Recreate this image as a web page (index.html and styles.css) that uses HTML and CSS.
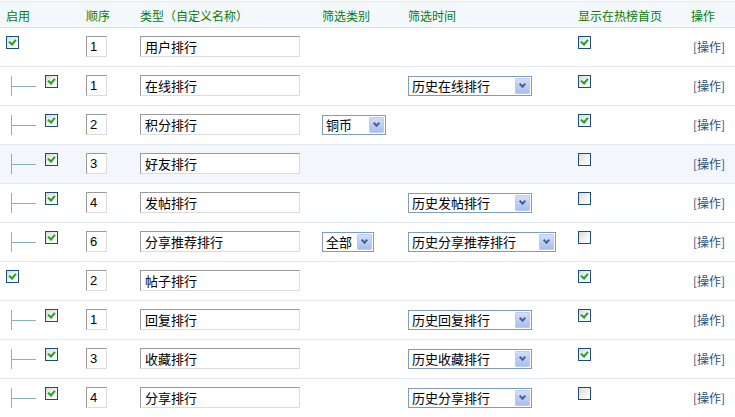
FILE: index.html
```html
<!DOCTYPE html>
<html>
<head>
<meta charset="utf-8">
<link rel="stylesheet" href="styles.css">
</head>
<body>
<div class="table">
  <div class="row head">
    <div class="c c1">启用</div>
    <div class="c">顺序</div>
    <div class="c">类型（自定义名称）</div>
    <div class="c">筛选类别</div>
    <div class="c">筛选时间</div>
    <div class="c">显示在热榜首页</div>
    <div class="c">操作</div>
  </div>

  <div class="row">
    <div class="c c1"><span class="cb on"></span></div>
    <div class="c"><span class="num">1</span></div>
    <div class="c"><span class="txt">用户排行</span></div>
    <div class="c"></div>
    <div class="c"></div>
    <div class="c"><span class="cb on"></span></div>
    <div class="c"><a class="op">[操作]</a></div>
  </div>

  <div class="row">
    <div class="c c1 child"><span class="tree"></span><span class="cb on"></span></div>
    <div class="c"><span class="num">1</span></div>
    <div class="c"><span class="txt">在线排行</span></div>
    <div class="c"></div>
    <div class="c"><span class="sel w124">历史在线排行<i class="arr"></i></span></div>
    <div class="c"><span class="cb on"></span></div>
    <div class="c"><a class="op">[操作]</a></div>
  </div>

  <div class="row">
    <div class="c c1 child"><span class="tree"></span><span class="cb on"></span></div>
    <div class="c"><span class="num">2</span></div>
    <div class="c"><span class="txt">积分排行</span></div>
    <div class="c"><span class="sel w64">铜币<i class="arr"></i></span></div>
    <div class="c"></div>
    <div class="c"><span class="cb on"></span></div>
    <div class="c"><a class="op">[操作]</a></div>
  </div>

  <div class="row hl">
    <div class="c c1 child"><span class="tree"></span><span class="cb on"></span></div>
    <div class="c"><span class="num">3</span></div>
    <div class="c"><span class="txt">好友排行</span></div>
    <div class="c"></div>
    <div class="c"></div>
    <div class="c"><span class="cb"></span></div>
    <div class="c"><a class="op">[操作]</a></div>
  </div>

  <div class="row">
    <div class="c c1 child"><span class="tree"></span><span class="cb on"></span></div>
    <div class="c"><span class="num">4</span></div>
    <div class="c"><span class="txt">发帖排行</span></div>
    <div class="c"></div>
    <div class="c"><span class="sel w124">历史发帖排行<i class="arr"></i></span></div>
    <div class="c"><span class="cb"></span></div>
    <div class="c"><a class="op">[操作]</a></div>
  </div>

  <div class="row">
    <div class="c c1 child"><span class="tree"></span><span class="cb on"></span></div>
    <div class="c"><span class="num">6</span></div>
    <div class="c"><span class="txt">分享推荐排行</span></div>
    <div class="c"><span class="sel w52">全部<i class="arr"></i></span></div>
    <div class="c"><span class="sel w148">历史分享推荐排行<i class="arr"></i></span></div>
    <div class="c"><span class="cb"></span></div>
    <div class="c"><a class="op">[操作]</a></div>
  </div>

  <div class="row">
    <div class="c c1"><span class="cb on"></span></div>
    <div class="c"><span class="num">2</span></div>
    <div class="c"><span class="txt">帖子排行</span></div>
    <div class="c"></div>
    <div class="c"></div>
    <div class="c"><span class="cb on"></span></div>
    <div class="c"><a class="op">[操作]</a></div>
  </div>

  <div class="row">
    <div class="c c1 child"><span class="tree"></span><span class="cb on"></span></div>
    <div class="c"><span class="num">1</span></div>
    <div class="c"><span class="txt">回复排行</span></div>
    <div class="c"></div>
    <div class="c"><span class="sel w124">历史回复排行<i class="arr"></i></span></div>
    <div class="c"><span class="cb on"></span></div>
    <div class="c"><a class="op">[操作]</a></div>
  </div>

  <div class="row">
    <div class="c c1 child"><span class="tree"></span><span class="cb on"></span></div>
    <div class="c"><span class="num">3</span></div>
    <div class="c"><span class="txt">收藏排行</span></div>
    <div class="c"></div>
    <div class="c"><span class="sel w124">历史收藏排行<i class="arr"></i></span></div>
    <div class="c"><span class="cb on"></span></div>
    <div class="c"><a class="op">[操作]</a></div>
  </div>

  <div class="row">
    <div class="c c1 child"><span class="tree"></span><span class="cb on"></span></div>
    <div class="c"><span class="num">4</span></div>
    <div class="c"><span class="txt">分享排行</span></div>
    <div class="c"></div>
    <div class="c"><span class="sel w124">历史分享排行<i class="arr"></i></span></div>
    <div class="c"><span class="cb"></span></div>
    <div class="c"><a class="op">[操作]</a></div>
  </div>
</div>
</body>
</html>
```

FILE: styles.css
```css
html, body {
  margin: 0;
  padding: 0;
  background: #fff;
}
body {
  font-family: "Noto Sans CJK SC", "Liberation Sans", sans-serif;
  font-size: 12px;
  color: #000;
  overflow: hidden;
}
.table {
  padding-top: 1px;
  width: 735px;
}
.row {
  display: grid;
  grid-template-columns: 86px 54px 182px 86px 170px 113px 44px;
  height: 38px;
  box-sizing: border-box;
  padding-bottom: 1px;
  border-bottom: 1px solid #e1e8ef;
  align-items: stretch;
  box-sizing: content-box;
  height: 37px;
}
.row.head {
  border-top: 1px solid #e1eaf2;
  border-bottom: 1px solid #d9e4ee;
  background: #f3f8fc;
  color: #0b7a0b;
  line-height: 14px;
  padding-top: 2px;
  padding-bottom: 0;
  box-sizing: content-box;
  height: 23px;
}
.row.hl {
  background: #f3f6fb;
}
.c {
  display: flex;
  align-items: center;
  white-space: nowrap;
}
.c1 {
  padding-left: 6px;
}
.c1.child {
  padding-left: 11px;
}
.cb {
  display: inline-block;
  width: 13px;
  height: 13px;
  box-sizing: border-box;
  border: 1px solid #1d4e7a;
  background: linear-gradient(135deg, #dcdcd6 0%, #f4f4f2 60%, #ffffff 100%);
  position: relative;
  align-self: flex-start;
  margin-top: 8px;
}
.cb.on::after {
  content: "";
  position: absolute;
  left: 3px;
  top: 1px;
  width: 3px;
  height: 5px;
  border-right: 2px solid #21a121;
  border-bottom: 2px solid #21a121;
  transform: rotate(40deg);
}
.tree {
  display: inline-block;
  width: 24px;
  height: 20px;
  border-left: 1px solid #86b4bc;
  position: relative;
  margin-right: 9px;
  align-self: flex-start;
  margin-top: 9px;
}
.tree::after {
  content: "";
  position: absolute;
  left: 0;
  top: 10px;
  width: 24px;
  height: 1px;
  background: #86b4bc;
}
.num, .txt {
  display: inline-block;
  height: 21px;
  box-sizing: border-box;
  border: 1px solid;
  border-color: #9a9a9a #dcdcdc #dcdcdc #9a9a9a;
  background: #fff;
  line-height: 19px;
  font-size: 13px;
  padding-left: 3px;
}
.num {
  width: 21px;
  font-family: "Liberation Sans", sans-serif;
}
.txt {
  width: 160px;
  padding-left: 4px;
}
.sel {
  display: inline-flex;
  align-items: center;
  justify-content: space-between;
  height: 20px;
  box-sizing: border-box;
  border: 1px solid #7f9db9;
  background: #fff;
  font-size: 13px;
  padding: 0 1px 0 3px;
  line-height: 18px;
}
.w64 { width: 64px; }
.w52 { width: 52px; }
.w124 { width: 124px; }
.w148 { width: 148px; }
.arr {
  display: inline-block;
  width: 15px;
  height: 16px;
  box-sizing: border-box;
  border: 1px solid #b8cdf5;
  border-radius: 1px;
  background: linear-gradient(180deg, #d2defb 0%, #bccdf6 50%, #a9bdf0 100%);
  position: relative;
}
.arr::after {
  content: "";
  position: absolute;
  left: 4px;
  top: 3px;
  width: 3px;
  height: 3px;
  border-right: 2px solid #4d6185;
  border-bottom: 2px solid #4d6185;
  transform: rotate(45deg);
}
.op {
  color: #2f5077;
  padding-left: 2px;
  font-size: 12px;
  cursor: pointer;
}
```
